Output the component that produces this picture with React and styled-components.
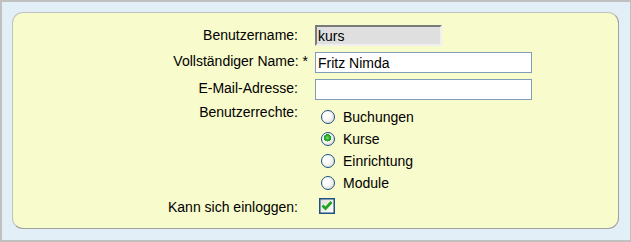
import React from 'react';
import styled, { createGlobalStyle } from 'styled-components';

const GlobalStyle = createGlobalStyle`
    html, body {
        margin: 0;
        padding: 0;
    }
    body {
        font-family: "Liberation Sans", Arial, sans-serif;
        color: #000;
    }
`;

const rights = [
    { id: 'buchungen', label: 'Buchungen' },
    { id: 'kurse', label: 'Kurse' },
    { id: 'einrichtung', label: 'Einrichtung' },
    { id: 'module', label: 'Module' },
];

export default function App() {
    return (
        <>
            <GlobalStyle />
            <Frame>
                <Panel>
                    <Form>
                        <Label $top={2}>Benutzername:</Label>
                        <ReadOnlyInput value="kurs" readOnly />

                        <Label $top={1}>
                            Vollständiger Name:<Required> *</Required>
                        </Label>
                        <TextInput defaultValue="Fritz Nimda" />

                        <Label $top={1}>E-Mail-Adresse:</Label>
                        <TextInput defaultValue="" />

                        <Label $top={-2}>Benutzerrechte:</Label>
                        <RadioList>
                            {rights.map((r) => (
                                <RadioRow key={r.id}>
                                    <Radio type="radio" name="rechte" defaultChecked={r.id === 'kurse'} />
                                    {r.label}
                                </RadioRow>
                            ))}
                        </RadioList>

                        <Label $top={-1}>Kann sich einloggen:</Label>
                        <CheckRow>
                            <CheckBox>
                                <svg width="14" height="14" viewBox="0 0 14 14">
                                    <path d="M2.5 6.5 L5.5 9.5 L11.5 3" fill="none" stroke="#21a121" strokeWidth="2.6" />
                                </svg>
                            </CheckBox>
                        </CheckRow>
                    </Form>
                </Panel>
            </Frame>
        </>
    );
}

const Frame = styled.div`
    box-sizing: border-box;
    width: 631px;
    height: 242px;
    background: #e3eff7;
    border: 2px solid #c0c0c0;
    border-right-width: 1px;
    padding: 10px 11px 11px 10px;
    display: flex;
`;
const Panel = styled.div`
    flex: 1;
    background: #f8fbcc;
    border: 1px solid;
    border-color: #c2c2c2 #a0a0a0 #a0a0a0 #c2c2c2;
    border-radius: 11px;
    padding-top: 12px;
`;
const Form = styled.div`
    display: grid;
    grid-template-columns: 285px 1fr;
    column-gap: 17px;
    row-gap: 6px;
    align-items: start;
`;
const Label = styled.div`
    text-align: right;
    font-size: 14px;
    line-height: 16px;
    margin-top: ${(p) => p.$top}px;
`;
const Required = styled.span`
    margin-right: -10px;
`;
const TextInput = styled.input`
    box-sizing: border-box;
    width: 217px;
    height: 21px;
    margin: 0;
    padding: 0 2px;
    border: 1px solid #7f9db9;
    background: #fff;
    font-family: "Liberation Sans", Arial, sans-serif;
    font-size: 14px;
    color: #000;
    outline: none;
`;
const ReadOnlyInput = styled(TextInput)`
    width: 127px;
    padding: 0 1px;
    background: #dfdfdf;
    border: 2px solid;
    border-color: #7a7a7a #f0f0f0 #f0f0f0 #7a7a7a;
`;
const RadioList = styled.div`
    display: flex;
    flex-direction: column;
`;
const RadioRow = styled.label`
    display: flex;
    align-items: center;
    gap: 8px;
    height: 22px;
    padding-left: 6px;
    font-size: 14px;
`;
const Radio = styled.input`
    appearance: none;
    box-sizing: border-box;
    width: 14px;
    height: 14px;
    margin: 0;
    border-radius: 50%;
    border: 1px solid #1c5180;
    background: radial-gradient(circle at 35% 35%, #ffffff 30%, #e6e6e0 70%, #d2d2cc 100%);
    &:checked {
        background:
            radial-gradient(circle at 45% 40%, #7ee07e 0, #2fb52f 2px, #1b9a1b 3.6px, transparent 3.8px),
            radial-gradient(circle at 35% 35%, #ffffff 30%, #e6e6e0 70%, #d2d2cc 100%);
    }
`;
const CheckRow = styled.div`
    display: flex;
    padding-left: 4px;
    margin-top: -2px;
`;
const CheckBox = styled.span`
    box-sizing: border-box;
    width: 16px;
    height: 16px;
    border: 1px solid #1c5180;
    box-shadow: inset 0 0 0 0.5px #1c5180;
    background: linear-gradient(135deg, #dcdcd7 0%, #f2f2ee 60%, #ffffff 100%);
    display: flex;
    align-items: center;
    justify-content: center;
`;
